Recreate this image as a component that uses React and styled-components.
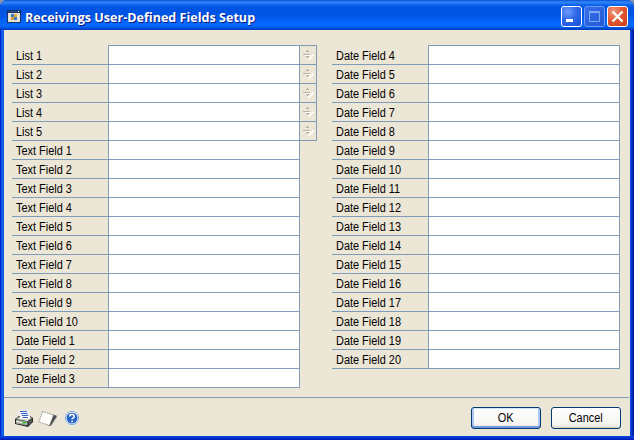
import React from 'react';
import styled, { createGlobalStyle } from 'styled-components';

const Global = createGlobalStyle`
  * { box-sizing: border-box; }
  body { margin: 0; background: #8b93ad; font-family: "Liberation Sans", Arial, sans-serif; font-size: 12px; color: #000; overflow: hidden; }
`;

const Window = styled.div`
  width: 634px;
  height: 440px;
  display: flex;
  flex-direction: column;
  border-radius: 7px 7px 0 0;
  overflow: hidden;
  background:
    linear-gradient(to bottom, transparent 436px, #0a48dc 436px, #0831d9 438px, #0019a8 440px),
    linear-gradient(to right, #0019cf 0, #0831d9 1px, #166aee 2px, #0855dd 4px, #0855dd 630px, #0441d8 631px, #001ea0 633px);
`;

const TitleBar = styled.header`
  height: 30px;
  flex: none;
  display: flex;
  align-items: center;
  padding: 2px 6px 0 7px;
  background: linear-gradient(to bottom, #0a50d4 0, #2f85f8 2px, #2a80f5 3px, #0a62ec 5px, #0054e3 8px, #0055e5 15px, #0464f8 21px, #0569ff 25px, #0360f2 27px, #0045c8 29px, #003dbd 30px);
`;

const AppIcon = styled.svg`
  width: 14px;
  height: 13px;
  flex: none;
`;

const Title = styled.h1`
  margin: 2px 0 0 4px;
  flex: 1;
  font: bold 13px/18px "Open Sans", "Noto Sans", sans-serif;
  white-space: nowrap;
  color: #fff;
  text-shadow: 1px 1px 0 #0a1883;
  transform: scaleX(0.967);
  transform-origin: left;
`;

const Controls = styled.div`
  display: flex;
  gap: 2px;
`;

const controlFill = {
  blue: 'radial-gradient(circle at 30% 25%, #6d9bfa 0, #3068e8 45%, #1850d8 100%)',
  dim: 'linear-gradient(135deg, #3872e8, #2058d8)',
  red: 'radial-gradient(circle at 30% 25%, #f09a80 0, #e25a35 45%, #c93c14 100%)',
};

const Control = styled.button`
  width: 21px;
  height: 21px;
  padding: 0;
  border: 1px solid ${(p) => (p.$tone === 'dim' ? '#6c9cf2' : '#fff')};
  border-radius: 3px;
  background: ${(p) => controlFill[p.$tone]};
  svg { display: block; width: 19px; height: 19px; }
`;

const Client = styled.div`
  flex: 1;
  margin: 0 4px 4px;
  background: #ece6d6;
  display: flex;
  flex-direction: column;
`;

const Columns = styled.main`
  display: grid;
  grid-template-columns: 305px 288px;
  column-gap: 15px;
  align-items: start;
  padding: 15px 0 0 8px;
  height: 367px;
`;

const FieldTable = styled.div`
  display: flex;
  flex-direction: column;
`;

const Row = styled.label`
  display: flex;
  height: ${(p) => (p.$first ? 20 : 19)}px;
`;

const Caption = styled.span`
  width: 96px;
  padding: ${(p) => (p.$first ? 4 : 3)}px 0 0 4px;
  border-bottom: 1px solid #7f9db9;
  line-height: 15px;
  white-space: nowrap;
`;

const Label = styled.span`
  display: inline-block;
  transform: scaleX(${(p) => p.$scale || 0.91});
  transform-origin: ${(p) => p.$origin || 'left'};
`;

const Entry = styled.input`
  width: 192px;
  height: 100%;
  padding: 0 4px;
  background: #fff;
  border: solid #7f9db9;
  border-width: ${(p) => (p.$first ? 1 : 0)}px 1px 1px;
  border-radius: 0;
  outline: none;
  font: inherit;
`;

const Spinner = styled.span`
  width: 17px;
  height: 100%;
  border: solid #7f9db9;
  border-width: ${(p) => (p.$first ? 1 : 0)}px 1px 1px 0;
  svg { display: block; width: 16px; height: 18px; }
`;

const Footer = styled.footer`
  flex: 1;
  border-top: 1px solid #7f9db9;
  margin-right: 1px;
  display: flex;
  align-items: flex-start;
  padding: 9px 8px 0 10px;
`;

const Tools = styled.div`
  flex: 1;
  display: flex;
  gap: 5px;
  padding-top: 2px;
  svg { display: block; width: 19px; height: 18px; }
`;

const Actions = styled.div`
  display: flex;
  gap: 10px;
`;

const Push = styled.button`
  width: 70px;
  height: 22px;
  padding: 0;
  border: 1px solid #003c74;
  border-radius: 3px;
  background: linear-gradient(#fff, #f6f5f1 80%, #e0dcd0);
  box-shadow: ${(p) => (p.$primary ? 'inset 0 1px #cee7ff, inset 0 -2px #7495e0, inset 2px 0 #adc6f3, inset -2px 0 #adc6f3' : 'inset 0 -1px #d6d0c5')};
  font: 12px/18px "Liberation Sans", Arial, sans-serif;
  color: #000;
`;

const listNames = [1, 2, 3, 4, 5].map((n) => `List ${n}`);
const textNames = Array.from({ length: 10 }, (_, i) => `Text Field ${i + 1}`);
const dateNames = Array.from({ length: 20 }, (_, i) => `Date Field ${i + 1}`);
const leftNames = [...listNames, ...textNames, ...dateNames.slice(0, 3)];
const rightNames = dateNames.slice(3);

function SortGlyph() {
  return (
    <svg viewBox="0 0 16 18" shapeRendering="crispEdges">
      <path d="M12 8h1v1h1v1h-1v1h-1v1h-1v1h-1v1H8v-1h1v-1h1v-1h1v-1h1zM5 9h6v1H5zM8 5h1v1H8z" fill="#fff" />
      <path d="M7 4h1v1h1v1H6V5h1zM3 8h7v1H3zM6 10h3v1H8v1H7v-1H6z" fill="#b5b1a2" />
    </svg>
  );
}

function Fields({ names }) {
  return (
    <FieldTable>
      {names.map((name, i) => (
        <Row key={name} $first={i === 0}>
          <Caption $first={i === 0}><Label>{name}</Label></Caption>
          <Entry $first={i === 0} />
          {name.startsWith('List') && <Spinner $first={i === 0}><SortGlyph /></Spinner>}
        </Row>
      ))}
    </FieldTable>
  );
}

function PrinterIcon() {
  return (
    <svg viewBox="0 0 19 18">
      <path d="M1 10l4-3h11l3 2v4l-5 5L1 15z" fill="#26292b" />
      <path d="M2 10l4-2.5h9l3 1.5-4.5 3.2z" fill="#d5d7c8" />
      <path d="M2 10.8l11.3 1.8v3.8L2 14.4z" fill="#a6aba0" />
      <path d="M14.3 12.6l3.7-2.8v3.1l-3.7 3.5z" fill="#54595a" />
      <path d="M5 1.3L13.5 1l2.6 7-2.6 2.2-7-.8z" fill="#fff" />
      <path d="M6 2.6l7-.4M7 4.6l6.8-.3M7.8 6.6l6.6-.3M8.5 8.4l5.4.1" fill="none" stroke="#2459bd" strokeWidth="1" />
      <path d="M2.5 12.5l10 1.6" stroke="#f2f2e9" />
      <path d="M8.5 12.5l3.5.6v1.4l-3.5-.6z" fill="#00c32e" />
    </svg>
  );
}

function NoteIcon() {
  return (
    <svg viewBox="0 0 19 18">
      <path d="M5 3l13.6 3.5v1.7L13 17l-3-.3z" fill="#777b7c" />
      <path d="M15.5 6l3 1-5.3 8.5-1.8 1z" fill="#484d50" />
      <path d="M4.6 2.4l10.9 3.7-4 10.1L.8 13.2z" fill="#fffefa" stroke="#77786f" strokeWidth=".8" strokeDasharray="1.4 1" />
    </svg>
  );
}

function HelpIcon() {
  return (
    <svg viewBox="0 0 19 18">
      <circle cx="10" cy="9" r="6.6" fill="#fff" stroke="#86aee3" />
      <circle cx="10" cy="9" r="5.5" fill="#2864c8" />
      <path d="M7.7 7.6c0-3 4.6-2.8 4.6-.3 0 1.6-2.2 1.6-2.2 3.2M10.1 11.7v1.5" fill="none" stroke="#fff" strokeWidth="1.6" />
    </svg>
  );
}

export default function App() {
  return (
    <>
      <Global />
      <Window>
        <TitleBar>
          <AppIcon viewBox="0 0 14 13" shapeRendering="crispEdges">
            <path d="M0 0h14v13H0z" fill="#163366" />
            <path d="M1 3h12v9H1z" fill="#e3e1d8" />
            <path d="M1 1h9v1H1z" fill="#2c4c85" />
            <path d="M11 1h1v1h-1z" fill="#fff" />
            <path d="M4 4h3v3H4z" fill="#3d78c5" />
            <path d="M7 4h3v3H7z" fill="#e8b02d" />
            <path d="M4 7h3v3H4z" fill="#d8a32d" />
            <path d="M7 7h3v3H7z" fill="#3d78c5" />
          </AppIcon>
          <Title>Receivings User-Defined Fields Setup</Title>
          <Controls>
            <Control $tone="blue" aria-label="Minimize">
              <svg viewBox="0 0 19 19"><path d="M4 12h7v3H4z" fill="#fff" /></svg>
            </Control>
            <Control $tone="dim" aria-label="Maximize" disabled>
              <svg viewBox="0 0 19 19"><path d="M4.5 4.5h10v10h-10zM4 5.5h11" fill="none" stroke="#7ea6f3" strokeWidth="1" /></svg>
            </Control>
            <Control $tone="red" aria-label="Close">
              <svg viewBox="0 0 19 19"><path d="M4.5 4.5l10 10M14.5 4.5l-10 10" stroke="#fff" strokeWidth="2.3" /></svg>
            </Control>
          </Controls>
        </TitleBar>
        <Client>
          <Columns>
            <Fields names={leftNames} />
            <Fields names={rightNames} />
          </Columns>
          <Footer>
            <Tools><PrinterIcon /><NoteIcon /><HelpIcon /></Tools>
            <Actions>
              <Push $primary><Label $scale={0.91} $origin="center">OK</Label></Push>
              <Push><Label $scale={0.91} $origin="center">Cancel</Label></Push>
            </Actions>
          </Footer>
        </Client>
      </Window>
    </>
  );
}
